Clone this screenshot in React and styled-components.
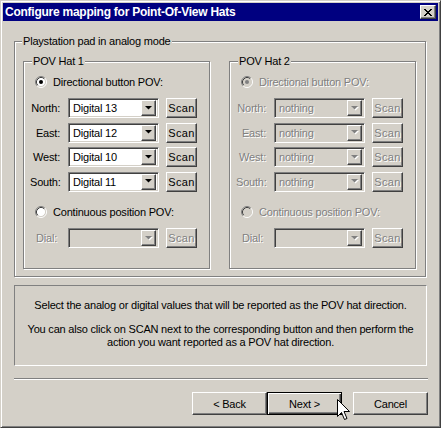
import React from 'react';
import styled, { createGlobalStyle, css } from 'styled-components';

const face = '#d4d0c8';

const GlobalStyle = createGlobalStyle`
  html, body { margin: 0; padding: 0; background: ${face}; }
  body {
    font-family: "Liberation Sans", Arial, sans-serif;
    font-size: 11px;
    letter-spacing: -0.2px;
    color: #000;
  }
  * { box-sizing: border-box; }
`;

const disabledText = css`
  color: #808080;
  text-shadow: 1px 1px 0 #fff;
`;

const raised = css`
  border: 1px solid;
  border-color: #fff #404040 #404040 #fff;
  box-shadow: inset -1px -1px 0 #808080;
  background: ${face};
`;

const Window = styled.div`
  position: relative;
  width: 441px;
  height: 428px;
  background: ${face};
  border: 1px solid;
  border-color: ${face} #404040 #404040 ${face};
  box-shadow: inset 1px 1px 0 #fff, inset -1px -1px 0 #808080;
  padding: 2px;
  display: flex;
  flex-direction: column;
`;

const TitleBar = styled.div`
  height: 18px;
  background: #000080;
  display: flex;
  align-items: center;
  padding-left: 2px;
`;

const TitleText = styled.span`
  color: #fff;
  font-weight: bold;
  font-size: 12px;
  letter-spacing: -0.25px;
`;

const CloseButton = styled.div`
  ${raised};
  margin-left: auto;
  margin-right: 2px;
  width: 16px;
  height: 14px;
  display: flex;
  align-items: center;
  justify-content: center;
`;

const Body = styled.div`
  flex: 1;
  display: flex;
  flex-direction: column;
  padding: 20px 0 0 11px;
`;

const Group = styled.div`
  position: relative;
  border: 1px solid #808080;
  box-shadow: 1px 1px 0 #fff, inset 1px 1px 0 #fff;
`;

const Legend = styled.span`
  position: absolute;
  top: -7px;
  left: ${p => p.$left}px;
  padding: 0 1px;
  line-height: 13px;
  background: ${face};
  white-space: nowrap;
`;

const OuterGroup = styled(Group)`
  width: 412px;
  height: 236px;
  padding: 19px 0 0 8px;
  display: flex;
  gap: 19px;
`;

const HatGroup = styled(Group)`
  width: 187px;
  height: 208px;
  padding: 14px 0 0 6px;
  display: flex;
  flex-direction: column;
`;

const RadioRow = styled.div`
  display: flex;
  align-items: center;
  gap: 6px;
  height: 12px;
  margin-left: 5px;
  margin-top: ${p => p.$top || 0}px;
  white-space: nowrap;
  ${p => p.$disabled && disabledText};
`;

const Rows = styled.div`
  display: flex;
  flex-direction: column;
  gap: 4.5px;
  margin-top: 10px;
`;

const FieldRow = styled.div`
  display: flex;
  align-items: center;
  height: 20px;
  margin-top: ${p => p.$top || 0}px;
`;

const Label = styled.span`
  width: 30px;
  padding-right: ${p => p.$pad || 0}px;
  text-align: right;
  white-space: nowrap;
  ${p => p.$disabled && disabledText};
`;

const Combo = styled.div`
  width: 91px;
  height: 20px;
  margin-left: 8px;
  border: 1px solid;
  border-color: #808080 #fff #fff #808080;
  box-shadow: inset 1px 1px 0 #404040, inset -1px -1px 0 ${face};
  background: ${p => (p.$disabled ? face : '#fff')};
  display: flex;
  align-items: center;
  padding: 2px;
`;

const ComboText = styled.span`
  flex: 1;
  padding-left: 2px;
  white-space: nowrap;
  ${p => p.$disabled && disabledText};
`;

const ArrowButton = styled.div`
  ${raised};
  width: 15px;
  height: 16px;
  display: flex;
  align-items: center;
  justify-content: center;
`;

const ScanButton = styled.div`
  ${raised};
  width: 31px;
  height: 20px;
  margin-left: 7px;
  display: flex;
  align-items: center;
  justify-content: center;
  letter-spacing: 0.3px;
  ${p => p.$disabled && disabledText};
`;

const InfoBox = styled.div`
  margin-top: 8px;
  width: 413px;
  height: 81px;
  border: 1px solid;
  border-color: #808080 #fff #fff #808080;
  padding-top: 13px;
  text-align: center;
`;

const InfoText = styled.p`
  margin: 0 0 11px;
  line-height: 13px;
`;

const Separator = styled.div`
  margin-top: 12px;
  width: 414px;
  height: 2px;
  border-top: 1px solid #808080;
  border-bottom: 1px solid #fff;
`;

const ButtonRow = styled.div`
  margin-top: 12px;
  width: 414px;
  display: flex;
  justify-content: flex-end;
`;

const PushButton = styled.div`
  width: 75px;
  height: 23px;
  margin-left: ${p => p.$gap || 0}px;
  display: flex;
  align-items: center;
  justify-content: center;
  background: ${face};
  ${p => p.$default
    ? css`
        border: 1px solid #000;
        box-shadow: inset 1px 1px 0 #fff, inset -1px -1px 0 #404040, inset -2px -2px 0 #808080;
      `
    : css`
        border: 1px solid;
        border-color: #fff #404040 #404040 #fff;
        box-shadow: inset -1px -1px 0 #808080;
      `}
`;

const Cursor = styled.svg`
  position: absolute;
  left: 336px;
  top: 398px;
`;

const Radio = ({ checked, disabled }) => (
  <svg width="12" height="12" viewBox="0 0 12 12">
    <circle cx="6" cy="6" r="4.5" fill={disabled ? face : '#fff'} />
    <path d="M2.11 9.89 A5.5 5.5 0 0 1 9.89 2.11" stroke="#808080" fill="none" />
    <path d="M9.89 2.11 A5.5 5.5 0 0 1 2.11 9.89" stroke="#fff" fill="none" />
    <path d="M2.82 9.18 A4.5 4.5 0 0 1 9.18 2.82" stroke="#404040" fill="none" />
    <path d="M9.18 2.82 A4.5 4.5 0 0 1 2.82 9.18" stroke={face} fill="none" />
    {checked && <circle cx="6" cy="6" r="2" fill={disabled ? '#808080' : '#000'} />}
  </svg>
);

const Arrow = ({ disabled }) => (
  <svg width="8" height="5" viewBox="0 0 8 5">
    {disabled && <polygon points="1,1 8,1 4.5,4.5" fill="#fff" />}
    <polygon points="0,0 7,0 3.5,3.5" fill={disabled ? '#808080' : '#000'} />
  </svg>
);

const ComboBox = ({ value, disabled }) => (
  <Combo $disabled={disabled}>
    <ComboText $disabled={disabled}>{value}</ComboText>
    <ArrowButton>
      <Arrow disabled={disabled} />
    </ArrowButton>
  </Combo>
);

const directions = ['North', 'East', 'West', 'South'];

const HatPanel = ({ title, values, disabled }) => (
  <HatGroup>
    <Legend $left={8}>{title}</Legend>
    <RadioRow $disabled={disabled}>
      <Radio checked disabled={disabled} />
      Directional button POV:
    </RadioRow>
    <Rows>
      {directions.map((d, i) => (
        <FieldRow key={d}>
          <Label $disabled={disabled}>{d}:</Label>
          <ComboBox value={values[i]} disabled={disabled} />
          <ScanButton $disabled={disabled}>Scan</ScanButton>
        </FieldRow>
      ))}
    </Rows>
    <RadioRow $top={14.5} $disabled={disabled}>
      <Radio disabled={disabled} />
      Continuous position POV:
    </RadioRow>
    <FieldRow $top={10}>
      <Label $pad={3} $disabled>Dial:</Label>
      <ComboBox value="" disabled />
      <ScanButton $disabled>Scan</ScanButton>
    </FieldRow>
  </HatGroup>
);

const App = () => {
  return (
    <>
      <GlobalStyle />
      <Window>
        <TitleBar>
          <TitleText>Configure mapping for Point-Of-View Hats</TitleText>
          <CloseButton>
            <svg width="8" height="7" viewBox="0 0 8 7">
              <path d="M0 0 L7 7 M1 0 L8 7 M7 0 L0 7 M8 0 L1 7" stroke="#000" strokeWidth="1" />
            </svg>
          </CloseButton>
        </TitleBar>
        <Body>
          <OuterGroup>
            <Legend $left={7}>Playstation pad in analog mode</Legend>
            <HatPanel
              title="POV Hat 1"
              values={['Digital 13', 'Digital 12', 'Digital 10', 'Digital 11']}
            />
            <HatPanel
              title="POV Hat 2"
              values={['nothing', 'nothing', 'nothing', 'nothing']}
              disabled
            />
          </OuterGroup>
          <InfoBox>
            <InfoText>Select the analog or digital values that will be reported as the POV hat direction.</InfoText>
            <InfoText>
              You can also click on SCAN next to the corresponding button and then perform the
              <br />
              action you want reported as a POV hat direction.
            </InfoText>
          </InfoBox>
          <Separator />
          <ButtonRow>
            <PushButton>&lt; Back</PushButton>
            <PushButton $default>Next &gt;</PushButton>
            <PushButton $gap={11}>Cancel</PushButton>
          </ButtonRow>
        </Body>
        <Cursor width="13" height="22" viewBox="0 0 13 22">
          <path
            d="M0.5 0.5 L0.5 17.5 L4.5 13.5 L7.5 20.5 L10 19.5 L7 12.5 L12.5 12.5 Z"
            fill="#fff"
            stroke="#000"
            strokeWidth="1"
          />
        </Cursor>
      </Window>
    </>
  );
};

export default App;
